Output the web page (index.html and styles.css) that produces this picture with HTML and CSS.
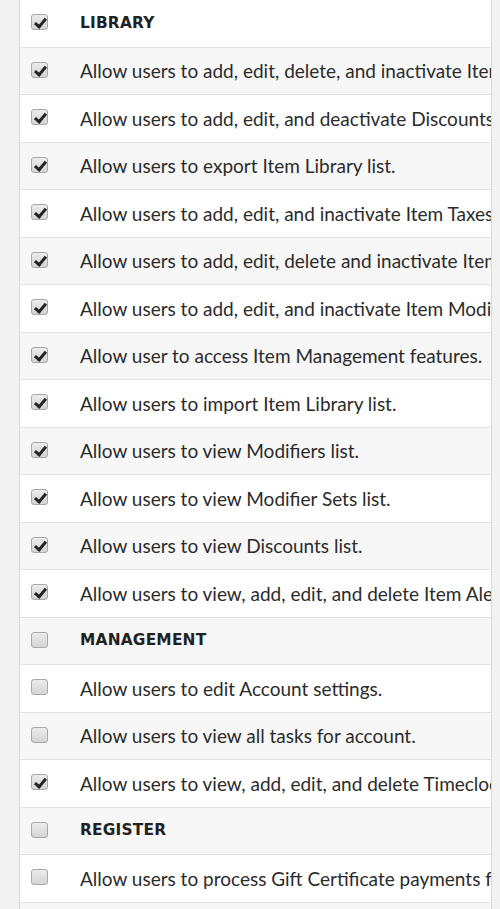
FILE: index.html
```html
<!DOCTYPE html>
<html lang="en">

<head>
    <meta charset="UTF-8">
    <meta name="viewport" content="width=device-width, initial-scale=1.0">
    <link rel="stylesheet" href="styles.css">
    <title>Permissions</title>
</head>

<body>
    <div class="page">
        <div class="perms">
            <div class="row group"><span class="box on"></span><span class="label">LIBRARY</span></div>
            <div class="row"><span class="box on"></span><span class="label">Allow users to add, edit, delete, and inactivate Item Library list.</span></div>
            <div class="row"><span class="box on"></span><span class="label">Allow users to add, edit, and deactivate Discounts list.</span></div>
            <div class="row"><span class="box on"></span><span class="label">Allow users to export Item Library list.</span></div>
            <div class="row"><span class="box on"></span><span class="label">Allow users to add, edit, and inactivate Item Taxes.</span></div>
            <div class="row"><span class="box on"></span><span class="label">Allow users to add, edit, delete and inactivate Item Modifiers.</span></div>
            <div class="row"><span class="box on"></span><span class="label">Allow users to add, edit, and inactivate Item Modifier Sets.</span></div>
            <div class="row"><span class="box on"></span><span class="label">Allow user to access Item Management features.</span></div>
            <div class="row"><span class="box on"></span><span class="label">Allow users to import Item Library list.</span></div>
            <div class="row"><span class="box on"></span><span class="label">Allow users to view Modifiers list.</span></div>
            <div class="row"><span class="box on"></span><span class="label">Allow users to view Modifier Sets list.</span></div>
            <div class="row"><span class="box on"></span><span class="label">Allow users to view Discounts list.</span></div>
            <div class="row"><span class="box on"></span><span class="label">Allow users to view, add, edit, and delete Item Alerts.</span></div>
            <div class="row group"><span class="box"></span><span class="label">MANAGEMENT</span></div>
            <div class="row"><span class="box"></span><span class="label">Allow users to edit Account settings.</span></div>
            <div class="row"><span class="box"></span><span class="label">Allow users to view all tasks for account.</span></div>
            <div class="row"><span class="box on"></span><span class="label">Allow users to view, add, edit, and delete Timeclock entries.</span></div>
            <div class="row group"><span class="box"></span><span class="label">REGISTER</span></div>
            <div class="row"><span class="box"></span><span class="label">Allow users to process Gift Certificate payments for orders.</span></div>
            <div class="row"><span class="box"></span><span class="label">Allow users to process refunds.</span></div>
        </div>
    </div>
</body>

</html>
```

FILE: styles.css
```css
* {
    margin: 0;
    padding: 0;
    box-sizing: border-box;
}

body {
    background: #f2f2f2;
    font-family: Lato, "Liberation Sans", sans-serif;
    color: #2b2b2b;
}

.page {
    height: 909px;
    overflow: hidden;
    padding: 0 8px 0 19px;
}

.perms {
    background: #fff;
    border-left: 1px solid #d9d9d9;
    border-right: 1px solid #d9d9d9;
}

.row {
    display: flex;
    align-items: center;
    height: 47.5px;
    border-bottom: 1px solid #e2e2e2;
    padding-left: 11px;
    overflow: hidden;
    white-space: nowrap;
}

.row:nth-child(even) {
    background: #f7f7f7;
}

.box {
    flex: none;
    width: 17px;
    height: 16px;
    border: 1px solid #a8a8a8;
    border-radius: 3px;
    background: linear-gradient(to bottom, #ececec, #d4d4d4);
    position: relative;
    margin-top: -2px;
}

.box.on::after {
    content: "";
    position: absolute;
    left: 5px;
    top: 1px;
    width: 4px;
    height: 9px;
    border: solid #222;
    border-width: 0 3px 3px 0;
    transform: rotate(40deg);
}

.label {
    flex: none;
    margin-left: 32px;
    font-size: 19px;
    line-height: 1;
}

.group .label {
    font-family: "DejaVu Sans", sans-serif;
    font-weight: bold;
    font-size: 15.4px;
    color: #222;
    letter-spacing: 0.2px;
}
```
